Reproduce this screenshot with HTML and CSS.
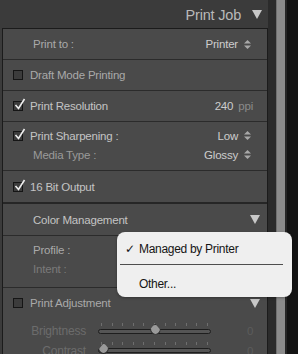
FILE: index.html
```html
<!DOCTYPE html>
<html lang="en">
<head>
    <meta charset="UTF-8">
    <title>Print Job</title>
    <link rel="stylesheet" href="styles.css">
</head>
<body>
    <div class="app">
        <div class="side">
            <header class="panel-head">
                <span class="head-title">Print Job</span>
                <svg class="tri" width="10" height="9" viewBox="0 0 10 9"><path d="M0 0H10L5 9Z"/></svg>
            </header>

            <div class="panel">
                <div class="row">
                    <span class="label indent">Print to :</span>
                    <span class="value">Printer <svg class="updown" width="7" height="9" viewBox="0 0 7 9"><path d="M0 3.5L3.5 0L7 3.5Z M0 5.5H7L3.5 9Z"/></svg></span>
                </div>

                <div class="row">
                    <span class="box"></span>
                    <span class="label">Draft Mode Printing</span>
                </div>

                <div class="row">
                    <span class="box checked"><svg class="tick" width="12" height="13" viewBox="0 0 12 13"><path d="M1.5 7L4.5 10.5L10.5 1" /></svg></span>
                    <span class="label bright">Print Resolution</span>
                    <span class="value num">240 <span class="unit">ppi</span></span>
                </div>

                <div class="group">
                    <div class="line">
                        <span class="box checked"><svg class="tick" width="12" height="13" viewBox="0 0 12 13"><path d="M1.5 7L4.5 10.5L10.5 1" /></svg></span>
                        <span class="label bright">Print Sharpening :</span>
                        <span class="value">Low <svg class="updown" width="7" height="9" viewBox="0 0 7 9"><path d="M0 3.5L3.5 0L7 3.5Z M0 5.5H7L3.5 9Z"/></svg></span>
                    </div>
                    <div class="line">
                        <span class="label indent dim">Media Type :</span>
                        <span class="value">Glossy <svg class="updown" width="7" height="9" viewBox="0 0 7 9"><path d="M0 3.5L3.5 0L7 3.5Z M0 5.5H7L3.5 9Z"/></svg></span>
                    </div>
                </div>

                <div class="row last">
                    <span class="box checked"><svg class="tick" width="12" height="13" viewBox="0 0 12 13"><path d="M1.5 7L4.5 10.5L10.5 1" /></svg></span>
                    <span class="label bright">16 Bit Output</span>
                </div>

                <div class="row sub-head">
                    <span class="label indent bright">Color Management</span>
                    <svg class="tri small" width="10" height="9" viewBox="0 0 10 9"><path d="M0 0H10L5 9Z"/></svg>
                </div>

                <div class="group tall">
                    <div class="line">
                        <span class="label indent">Profile :</span>
                    </div>
                    <div class="line">
                        <span class="label indent faint">Intent :</span>
                    </div>
                </div>

                <div class="row plain">
                    <span class="box"></span>
                    <span class="label">Print Adjustment</span>
                    <svg class="tri small" width="10" height="9" viewBox="0 0 10 9"><path d="M0 0H10L5 9Z"/></svg>
                </div>

                <div class="slider-row">
                    <span class="s-label">Brightness</span>
                    <div class="track">
                        <div class="ticks"><i></i><i></i><i></i><i></i><i></i><i></i><i></i><i></i><i></i><i></i><i></i></div>
                        <span class="thumb" style="left: 50%"></span>
                    </div>
                    <span class="s-val">0</span>
                </div>
                <div class="slider-row">
                    <span class="s-label">Contrast</span>
                    <div class="track">
                        <div class="ticks"><i></i><i></i><i></i><i></i><i></i><i></i><i></i><i></i><i></i><i></i><i></i></div>
                        <span class="thumb" style="left: 4%"></span>
                    </div>
                    <span class="s-val">0</span>
                </div>
            </div>
        </div>
        <div class="gutter"></div>
        <div class="scroll"></div>
        <div class="edge"></div>
    </div>

    <div class="menu">
        <div class="menu-item"><span class="check">✓</span>Managed by Printer</div>
        <div class="menu-sep"></div>
        <div class="menu-item">Other...</div>
    </div>
</body>
</html>
```

FILE: styles.css
```css
body {
    margin: 0;
    background-color: #3b3b3b;
    font-family: "Liberation Sans", Arial, sans-serif;
    font-size: 11.5px;
    letter-spacing: -0.2px;
    color: #b4b4b4;
    overflow: hidden;
}
.app {
    display: flex;
    height: 354px;
}
.side {
    width: 268px;
    background-color: #3b3b3b;
}
.panel-head {
    height: 28px;
    display: flex;
    align-items: center;
    justify-content: flex-end;
    padding-right: 6px;
    box-sizing: border-box;
}
.head-title {
    font-size: 14.5px;
    color: #b9b9b9;
    margin-right: 11px;
    margin-top: 2px;
}
.tri path {
    fill: #c8c8c8;
}
.panel {
    margin-left: 2px;
    height: 326px;
    background-color: #4a4a4a;
    border-left: 1px solid #1b1b1b;
    border-right: 1px solid #1b1b1b;
    border-top: 1px solid #1b1b1b;
}
.row {
    height: 30px;
    display: flex;
    align-items: center;
    padding: 0 29px 0 10px;
    border-bottom: 1px solid #2b2b2b;
}
.row.last {
    height: 31px;
    border-bottom: 2px solid #262626;
}
.row.sub-head {
    height: 31px;
    padding-right: 7px;
}
.row.plain {
    border-bottom: none;
    padding-right: 7px;
}
.group {
    height: 44px;
    padding: 4px 29px 0 10px;
    border-bottom: 1px solid #2b2b2b;
}
.group.tall {
    height: 47px;
}
.line {
    height: 19px;
    display: flex;
    align-items: center;
}
.label {
    flex: 1;
    color: #a9a9a9;
}
.label.bright {
    color: #c4c4c4;
}
.label.indent {
    padding-left: 20px;
}
.label.dim {
    color: #9a9a9a;
}
.label.faint {
    color: #7a7a7a;
}
.value {
    color: #cdcdcd;
    display: flex;
    align-items: center;
}
.updown {
    margin-left: 6px;
    margin-right: -13px;
}
.updown path {
    fill: #a8a8a8;
}
.num {
    margin-right: -15px;
}
.unit {
    color: #8a8a8a;
    margin-left: 5px;
}
.box {
    width: 8px;
    height: 8px;
    border: 1px solid #151515;
    background-color: #3c3c3c;
    margin-right: 7px;
    position: relative;
}
.tick {
    position: absolute;
    left: 0;
    top: -4px;
}
.tick path {
    fill: none;
    stroke: #eeeeee;
    stroke-width: 1.6;
}
.slider-row {
    height: 20px;
    display: flex;
    align-items: center;
    padding-top: 6px;
    box-sizing: border-box;
}
.slider-row + .slider-row {
    height: 19px;
}
.s-label {
    width: 83px;
    text-align: right;
    color: #6c6c6c;
    font-size: 12px;
    margin-right: 12px;
}
.track {
    position: relative;
    width: 111px;
    height: 3px;
    border: 1px solid #1e1e1e;
    border-radius: 3px;
    background-color: #555555;
}
.ticks {
    position: absolute;
    left: 2px;
    right: 2px;
    top: -7px;
    display: flex;
    justify-content: space-between;
}
.ticks i {
    width: 1px;
    height: 3px;
    background-color: #6e6e6e;
}
.thumb {
    position: absolute;
    top: -6px;
    width: 9px;
    height: 9px;
    margin-left: -5px;
    background-color: #9a9a9a;
    border: 1px solid #2a2a2a;
    border-radius: 50% 50% 50% 50% / 40% 40% 60% 60%;
    clip-path: polygon(50% 0, 100% 60%, 100% 100%, 0 100%, 0 60%);
}
.s-val {
    margin-left: 36px;
    color: #5c5c5c;
}
.gutter {
    width: 8px;
    background-color: #2b2b2b;
}
.scroll {
    width: 9px;
    background-color: #8b8b8b;
    border-left: 1px solid #6f6f6f;
    box-sizing: border-box;
}
.edge {
    flex: 1;
    background-color: #131313;
    border-left: 2px solid #262626;
}
.menu {
    position: absolute;
    left: 117px;
    top: 232px;
    width: 175px;
    height: 65px;
    box-sizing: border-box;
    padding-top: 8px;
    background-color: #efefef;
    border-radius: 8px;
    box-shadow: 0 1px 3px rgba(0, 0, 0, 0.3);
    color: #151515;
    font-family: "Liberation Sans", Arial, sans-serif;
    font-size: 12px;
    letter-spacing: -0.3px;
}
.menu-item {
    height: 18px;
    padding-left: 22px;
    position: relative;
    line-height: 18px;
}
.check {
    position: absolute;
    left: 8px;
    font-family: "DejaVu Sans", sans-serif;
    font-size: 12px;
    font-weight: bold;
}
.menu-sep {
    height: 1px;
    background-color: #4e4e4e;
    margin: 6px 9px 10px 3px;
}
```
